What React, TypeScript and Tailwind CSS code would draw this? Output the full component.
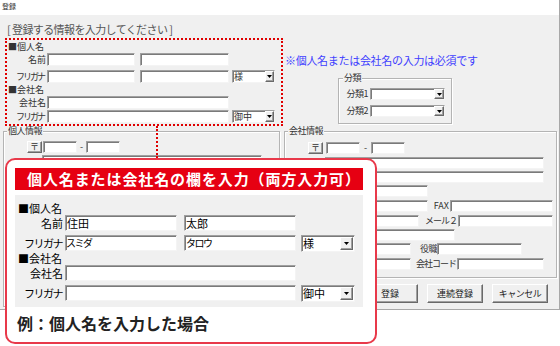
import React from "react";

const sunken =
  "bg-white border border-t-[#a0a0a0] border-l-[#a0a0a0] border-b-[#f4f4f4] border-r-[#f4f4f4] shadow-[inset_1px_1px_0_#7a7a7a]";
const raised =
  "bg-[#f0f0f0] border border-t-white border-l-white border-b-[#696969] border-r-[#696969] shadow-[inset_-1px_-1px_0_#a0a0a0]";
const group =
  "relative border border-[#b4b4b4] shadow-[inset_1px_1px_0_#ffffff,1px_1px_0_#ffffff]";

function Tri() {
  return (
    <svg width="5" height="3" viewBox="0 0 5 3">
      <path d="M0 0H5L2.5 3Z" fill="#000" />
    </svg>
  );
}

function Select({
  className,
  btn,
  text,
  textCls,
}: {
  className: string;
  btn: string;
  text?: string;
  textCls?: string;
}) {
  return (
    <div className={`${sunken} flex justify-between ${className}`}>
      <span className={textCls}>{text}</span>
      <div className={`${raised} flex items-center justify-center ${btn}`}>
        <Tri />
      </div>
    </div>
  );
}

export default function App() {
  return (
    <div className="relative w-[560px] h-[346px] overflow-hidden bg-white text-black font-['Noto_Sans_CJK_JP',sans-serif]">
      {/* window */}
      <div className="flex flex-col w-[560px] h-[310px] bg-[#f0f0f0] border-r border-b border-[#a8a8a8]">
        <div className="h-[15px] shrink-0 bg-white pl-[2px] pt-[2px] text-[7px] leading-[9px] text-[#333]">
          登録
        </div>
        <div className="ml-[7px] mt-[8px] h-[12px] text-[11px] leading-[12px] tracking-[-0.6px] text-[#555] whitespace-nowrap">
          [ 登録する情報を入力してください ]
        </div>

        {/* top section */}
        <div className="flex mt-[6px] h-[90px] shrink-0">
          <div className="ml-[8px] w-[268px] flex flex-col text-[#333]">
            <div className="h-[11px] text-[9px] leading-[11px]">■個人名</div>
            <div className="flex mt-[1px] h-[13px]">
              <span className="w-[38px] text-right text-[9px] leading-[13px]">名前</span>
              <div className={`${sunken} ml-[1px] w-[88px]`} />
              <div className={`${sunken} ml-[5px] w-[89px]`} />
            </div>
            <div className="flex mt-[4px] h-[13px]">
              <span className="w-[38px] text-right text-[9px] leading-[13px] tracking-[-2px] pr-[2px]">フリガナ</span>
              <div className={`${sunken} ml-[1px] w-[88px]`} />
              <div className={`${sunken} ml-[5px] w-[89px]`} />
              <Select
                className="ml-[3px] w-[43px]"
                btn="w-[9px]"
                text="様"
                textCls="text-[9px] leading-[11px] pl-[1px]"
              />
            </div>
            <div className="mt-[1px] h-[11px] text-[9px] leading-[11px]">■会社名</div>
            <div className="flex mt-[1px] h-[13px]">
              <span className="w-[38px] text-right text-[9px] leading-[13px]">会社名</span>
              <div className={`${sunken} ml-[1px] w-[182px]`} />
            </div>
            <div className="flex mt-[1px] h-[13px]">
              <span className="w-[38px] text-right text-[9px] leading-[13px] tracking-[-2px] pr-[2px]">フリガナ</span>
              <div className={`${sunken} ml-[1px] w-[182px]`} />
              <Select
                className="ml-[3px] w-[43px]"
                btn="w-[9px]"
                text="御中"
                textCls="text-[9px] leading-[11px] pl-[1px]"
              />
            </div>
          </div>

          <div className="ml-[9px] flex flex-col">
            <div className="mt-[13px] h-[13px] text-[11px] leading-[13px] tracking-[-0.3px] text-[#4040ff] whitespace-nowrap">
              ※個人名または会社名の入力は必須です
            </div>
            <div className={`${group} ml-[53px] mt-[11px] w-[114px] h-[46px]`}>
              <span className="absolute left-[4px] top-[-6px] bg-[#f0f0f0] px-[1px] text-[9px] leading-[10px] tracking-[-0.5px] text-[#333]">
                分類
              </span>
              <div className="flex flex-col pt-[9px] pl-[6px] gap-[5px]">
                <div className="flex h-[12px]">
                  <span className="w-[23px] text-right text-[9px] leading-[12px] tracking-[-0.5px] text-[#333]">分類1</span>
                  <Select className="ml-[2px] w-[75px]" btn="w-[10px]" />
                </div>
                <div className="flex h-[12px]">
                  <span className="w-[23px] text-right text-[9px] leading-[12px] tracking-[-0.5px] text-[#333]">分類2</span>
                  <Select className="ml-[2px] w-[75px]" btn="w-[10px]" />
                </div>
              </div>
            </div>
          </div>
        </div>

        {/* bottom section */}
        <div className="flex">
          <div className={`${group} ml-[3px] w-[277px] h-[176px]`}>
            <span className="absolute left-[3px] top-[-6px] bg-[#f0f0f0] px-[1px] text-[9px] leading-[10px] tracking-[-0.5px] text-[#333]">
              個人情報
            </span>
            <div className="flex ml-[23px] mt-[9px] h-[12px]">
              <div className={`${raised} w-[15px] text-[9px] leading-[10px] text-center text-[#333]`}>〒</div>
              <div className={`${sunken} ml-[1px] w-[34px]`} />
              <span className="w-[9px] text-center text-[9px] leading-[12px] text-[#333]">-</span>
              <div className={`${sunken} w-[34px]`} />
            </div>
            <div className={`${sunken} ml-[38px] mt-[2px] w-[220px] h-[12px]`} />
          </div>

          <div className="ml-[4px] flex flex-col">
            <div className={`${group} w-[273px] h-[147px]`}>
              <span className="absolute left-[3px] top-[-6px] bg-[#f0f0f0] px-[1px] text-[9px] leading-[10px] tracking-[-0.5px] text-[#333]">
                会社情報
              </span>
              <div className="flex flex-col text-[#333]">
                <div className="flex ml-[23px] mt-[10px] h-[12px]">
                  <div className={`${raised} w-[15px] text-[9px] leading-[10px] text-center`}>〒</div>
                  <div className={`${sunken} ml-[3px] w-[34px]`} />
                  <span className="w-[11px] text-center text-[9px] leading-[12px]">-</span>
                  <div className={`${sunken} w-[34px]`} />
                </div>
                <div className={`${sunken} ml-[40px] mt-[3px] w-[219px] h-[12px]`} />
                <div className={`${sunken} ml-[40px] mt-[2px] w-[219px] h-[12px]`} />
                <div className={`${sunken} ml-[40px] mt-[2px] w-[103px] h-[12px]`} />
                <div className="flex ml-[40px] mt-[3px] h-[12px]">
                  <div className={`${sunken} w-[103px]`} />
                  <span className="w-[22px] text-right text-[9px] leading-[12px] pr-[1px]">FAX</span>
                  <div className={`${sunken} w-[103px]`} />
                </div>
                <div className="flex ml-[40px] mt-[3px] h-[12px]">
                  <div className={`${sunken} w-[94px]`} />
                  <span className="w-[39px] text-right text-[9px] leading-[12px] tracking-[-1px] pr-[1px]">メール２</span>
                  <div className={`${sunken} w-[95px]`} />
                </div>
                <div className={`${sunken} ml-[40px] mt-[2px] w-[130px] h-[12px]`} />
                <div className="flex ml-[40px] mt-[2px] h-[12px]">
                  <div className={`${sunken} w-[86px]`} />
                  <span className="w-[26px] text-right text-[9px] leading-[12px] tracking-[-0.5px]">役職</span>
                  <div className={`${sunken} w-[85px]`} />
                </div>
                <div className="flex ml-[40px] mt-[3px] h-[12px]">
                  <div className={`${sunken} w-[86px]`} />
                  <span className="w-[46px] text-right text-[9px] leading-[12px] tracking-[-1px] pr-[1px]">会社コード</span>
                  <div className={`${sunken} w-[87px]`} />
                </div>
              </div>
            </div>
            <div className="flex gap-[9px] ml-[78px] mt-[6px] text-[9px] text-[#222]">
              <div className={`${raised} w-[56px] h-[19px] leading-[17px] text-center`}>登録</div>
              <div className={`${raised} w-[56px] h-[19px] leading-[17px] text-center`}>連続登録</div>
              <div className={`${raised} w-[56px] h-[19px] leading-[17px] text-center tracking-[-0.5px]`}>キャンセル</div>
            </div>
          </div>
        </div>
      </div>

      {/* red dotted highlight */}
      <div className="absolute left-[5px] top-[38px] w-[278px] h-[88px] border-2 border-dotted border-[#e00000]" />
      <div className="absolute left-[156px] top-[126px] h-[32px] w-0 border-l-2 border-dotted border-[#e00000]" />

      {/* callout */}
      <div className="absolute left-[5px] top-[158px] w-[372px] h-[186px] rounded-[10px] border-2 border-[#e8394a] bg-white flex flex-col">
        <div className="ml-[8px] mt-[8px] w-[348px] h-[22px] bg-[#e60012] pl-[12px] text-white font-bold text-[15px] leading-[22px] tracking-[0.9px] whitespace-nowrap">
          個人名または会社名の欄を入力（両方入力可）
        </div>
        <div className="ml-[8px] mt-[5px] w-[348px] h-[112px] bg-[#f0f0f0] flex flex-col pl-[3px]">
          <div className="mt-[7px] h-[12px] text-[11px] leading-[12px]">■個人名</div>
          <div className="flex mt-[1px] h-[16px]">
            <span className="w-[45px] text-right text-[11px] leading-[16px]">名前</span>
            <div className={`${sunken} ml-[2px] w-[112px] text-[11px] leading-[14px] pl-[1px]`}>住田</div>
            <div className={`${sunken} ml-[7px] w-[112px] text-[11px] leading-[14px] pl-[1px]`}>太郎</div>
          </div>
          <div className="flex mt-[4px] h-[16px]">
            <span className="w-[45px] text-right text-[11px] leading-[16px] tracking-[-1.5px] pr-[1px]">フリガナ</span>
            <div className={`${sunken} ml-[2px] w-[112px] text-[10px] leading-[14px] tracking-[-1.5px]`}>スミダ</div>
            <div className={`${sunken} ml-[7px] w-[112px] text-[10px] leading-[14px] tracking-[-1.5px] pl-[1px]`}>タロウ</div>
            <Select
              className="ml-[5px] w-[54px] h-[17px]"
              btn="w-[13px] my-[1px] mr-[1px]"
              text="様"
              textCls="text-[11px] leading-[14px] pl-[1px]"
            />
          </div>
          <div className="mt-[2px] h-[11px] text-[11px] leading-[11px]">■会社名</div>
          <div className="flex mt-[1px] h-[16px]">
            <span className="w-[45px] text-right text-[11px] leading-[16px]">会社名</span>
            <div className={`${sunken} ml-[2px] w-[231px]`} />
          </div>
          <div className="flex mt-[4px] h-[16px]">
            <span className="w-[45px] text-right text-[11px] leading-[16px] tracking-[-1.5px] pr-[1px]">フリガナ</span>
            <div className={`${sunken} ml-[2px] w-[231px]`} />
            <Select
              className="ml-[5px] w-[54px] h-[17px]"
              btn="w-[13px] my-[1px] mr-[1px]"
              text="御中"
              textCls="text-[11px] leading-[14px] pl-[1px]"
            />
          </div>
        </div>
        <div className="ml-[10px] mt-[8px] h-[16px] text-[16px] leading-[16px] font-bold text-[#222] whitespace-nowrap">
          例：個人名を入力した場合
        </div>
      </div>
    </div>
  );
}
